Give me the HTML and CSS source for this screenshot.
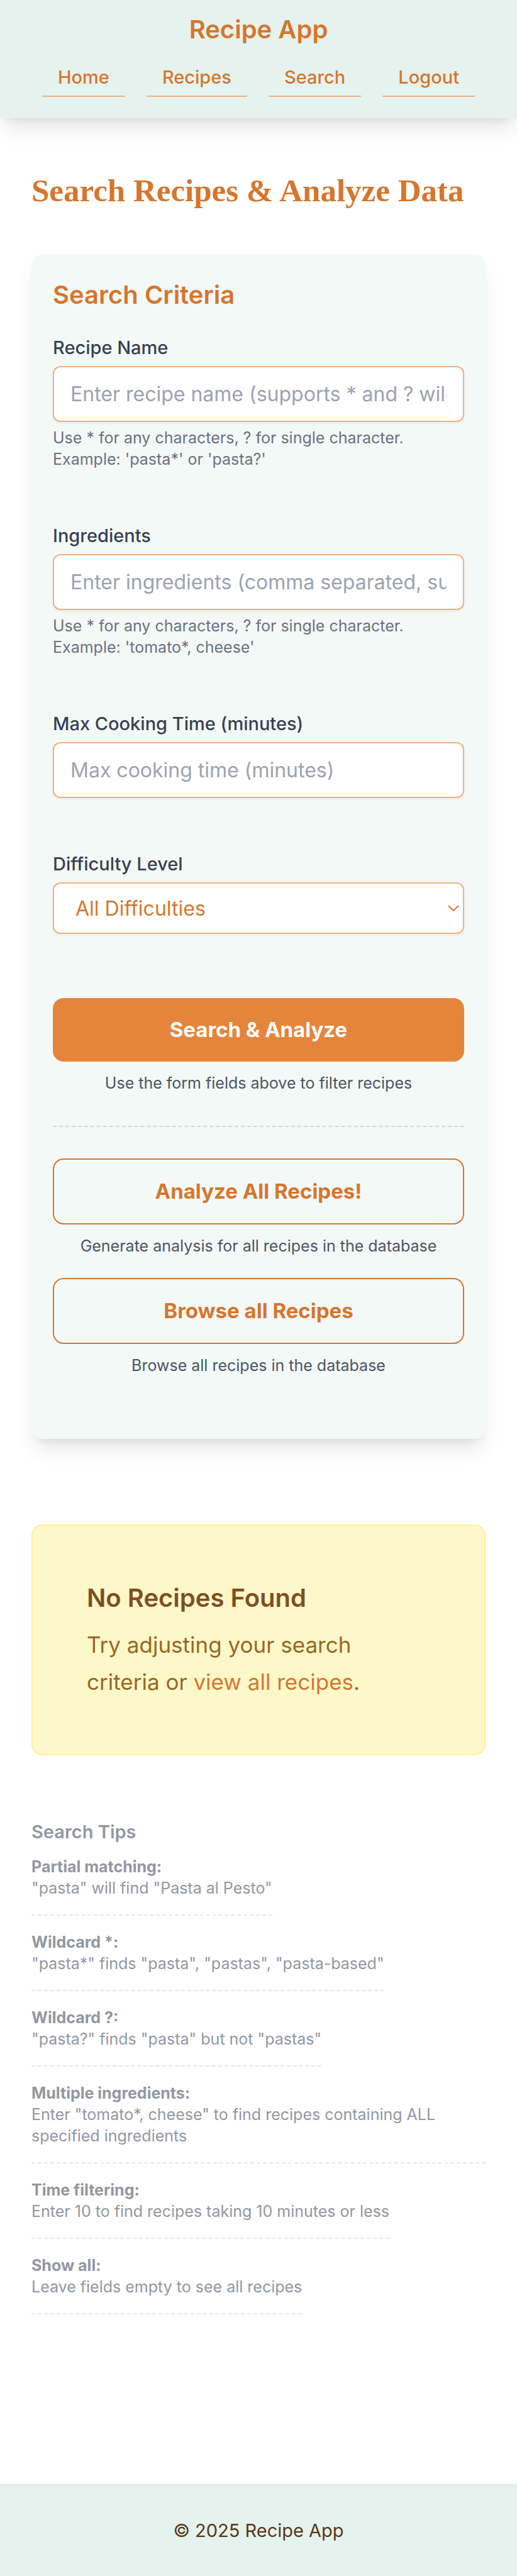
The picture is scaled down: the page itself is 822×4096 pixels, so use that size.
FILE: index.html
```html
<!DOCTYPE html>
<html lang="en">
<head>
<meta charset="utf-8">
<meta name="viewport" content="width=device-width, initial-scale=1">
<title>Recipe App</title>
<link rel="stylesheet" href="styles.css">
</head>
<body>
<header class="site-header">
  <a class="brand" href="#">Recipe App</a>
  <nav class="nav" aria-label="Main">
    <a class="nav-link" href="#">Home</a>
    <a class="nav-link" href="#">Recipes</a>
    <a class="nav-link" href="#">Search</a>
    <a class="nav-link" href="#">Logout</a>
  </nav>
</header>

<main class="page">
  <h1 class="page-title">Search Recipes &amp; Analyze Data</h1>

  <form class="card">
    <h2 class="card-title">Search Criteria</h2>
    <div class="fields">
      <div class="field">
        <label class="label" for="name">Recipe Name</label>
        <input class="control" id="name" type="text" placeholder="Enter recipe name (supports * and ? wildcards)">
        <p class="hint">Use * for any characters, ? for single character.<br>Example: 'pasta*' or 'pasta?'</p>
      </div>
      <div class="field">
        <label class="label" for="ingredients">Ingredients</label>
        <input class="control" id="ingredients" type="text" placeholder="Enter ingredients (comma separated, supports * and ? wildcards)">
        <p class="hint">Use * for any characters, ? for single character.<br>Example: 'tomato*, cheese'</p>
      </div>
      <div class="field">
        <label class="label" for="time">Max Cooking Time (minutes)</label>
        <input class="control" id="time" type="text" inputmode="numeric" placeholder="Max cooking time (minutes)">
      </div>
      <div class="field">
        <label class="label" for="difficulty">Difficulty Level</label>
        <div class="select-wrap">
          <select class="control select" id="difficulty">
            <option>All Difficulties</option>
            <option>Easy</option>
            <option>Medium</option>
            <option>Hard</option>
          </select>
          <svg class="chevron" viewBox="0 0 18 10" aria-hidden="true"><path d="M1 1l8 8 8-8"/></svg>
        </div>
      </div>
    </div>

    <div class="action action-main">
      <button class="button button-solid" type="submit">Search &amp; Analyze</button>
      <p class="caption">Use the form fields above to filter recipes</p>
    </div>
    <div class="more-actions">
      <div class="action">
        <button class="button button-outline" type="button">Analyze All Recipes!</button>
        <p class="caption">Generate analysis for all recipes in the database</p>
      </div>
      <div class="action">
        <button class="button button-outline" type="button">Browse all Recipes</button>
        <p class="caption">Browse all recipes in the database</p>
      </div>
    </div>
  </form>

  <section class="notice">
    <h2 class="notice-title">No Recipes Found</h2>
    <p class="notice-text">Try adjusting your search criteria or <a class="notice-link" href="#">view all recipes</a>.</p>
  </section>

  <section class="tips">
    <h2 class="tips-title">Search Tips</h2>
    <ul class="tips-list">
      <li class="tip"><strong class="tip-name">Partial matching:</strong>"pasta" will find "Pasta al Pesto"</li>
      <li class="tip"><strong class="tip-name">Wildcard *:</strong>"pasta*" finds "pasta", "pastas", "pasta-based"</li>
      <li class="tip"><strong class="tip-name">Wildcard ?:</strong>"pasta?" finds "pasta" but not "pastas"</li>
      <li class="tip"><strong class="tip-name">Multiple ingredients:</strong>Enter "tomato*, cheese" to find recipes containing ALL specified ingredients</li>
      <li class="tip"><strong class="tip-name">Time filtering:</strong>Enter 10 to find recipes taking 10 minutes or less</li>
      <li class="tip"><strong class="tip-name">Show all:</strong>Leave fields empty to see all recipes</li>
    </ul>
  </section>
</main>

<footer class="site-footer">© 2025 Recipe App</footer>
</body>
</html>
```
FILE: styles.css
```css
*,
*::before,
*::after {
  box-sizing: border-box;
}

:root {
  --orange: #d5762e;
  --orange-fill: #e5853b;
  --orange-line: #efb27e;
  --mint: #e4f3ed;
  --mint-light: #f3f9f7;
  --shadow: 0 21px 32px -6px rgba(0, 0, 0, 0.1), 0 8px 13px -8px rgba(0, 0, 0, 0.1);
}

body {
  margin: 0;
  min-height: 100vh;
  display: flex;
  flex-direction: column;
  background: #fff;
  font-family: Inter, "Liberation Sans", sans-serif;
  font-size: 25px;
  line-height: 34px;
}

h1, h2, p, ul {
  margin: 0;
  padding: 0;
}

a {
  text-decoration: none;
}

.site-header {
  display: flex;
  flex-direction: column;
  align-items: center;
  gap: 17px;
  padding: 17px 34px 34px;
  background: var(--mint);
  box-shadow: var(--shadow);
}

.brand {
  color: var(--orange);
  font-size: 40px;
  font-weight: 600;
  line-height: 60px;
}

.nav {
  display: flex;
  justify-content: center;
  gap: 34px;
}

.nav-link {
  padding: 8px 25px;
  border-bottom: 2px solid var(--orange-line);
  color: var(--orange);
  font-size: 29px;
  font-weight: 500;
  line-height: 42px;
}

.page {
  flex: 1;
  padding: 85px 50px 100px;
}

.page-title {
  margin-bottom: 72px;
  color: var(--orange);
  font-family: "Liberation Serif", serif;
  font-size: 51px;
  font-weight: 700;
  line-height: 60px;
}

.card {
  padding: 34px 34px 100px;
  border-radius: 17px;
  background: var(--mint-light);
  box-shadow: var(--shadow);
}

.card-title {
  margin-bottom: 34px;
  color: var(--orange);
  font-size: 40px;
  font-weight: 600;
  line-height: 59px;
}

.fields {
  display: grid;
  gap: 84px;
}

.field {
  display: grid;
  gap: 8px;
}

.label {
  color: #374151;
  font-size: 29px;
  font-weight: 500;
  line-height: 42px;
}

.control {
  width: 100%;
  height: 89px;
  padding: 0 26px;
  border: 2px solid var(--orange-line);
  border-radius: 12px;
  background: #fff;
  box-shadow: 0 2px 4px rgba(0, 0, 0, 0.05);
  color: #374151;
  font-family: inherit;
  font-size: 32px;
}

.control::placeholder {
  color: #9ca3af;
  opacity: 1;
}

.select-wrap {
  display: grid;
  align-items: center;
}

.select,
.chevron {
  grid-area: 1 / 1;
}

.select {
  height: 82px;
  padding: 0 34px;
  appearance: none;
  color: var(--orange);
}

.chevron {
  justify-self: end;
  width: 18px;
  margin-right: 8px;
  fill: none;
  stroke: var(--orange);
  stroke-width: 2;
  pointer-events: none;
}

.hint {
  color: #6b7280;
}

.action {
  display: grid;
  gap: 17px;
}

.action-main {
  margin-top: 102px;
}

.button {
  width: 100%;
  border-radius: 17px;
  font-family: inherit;
  font-size: 33px;
  font-weight: 700;
  line-height: 51px;
}

.button-solid {
  padding: 25px;
  border: 0;
  background: var(--orange-fill);
  color: #fff;
}

.button-outline {
  padding: 25px;
  border: 2px solid var(--orange);
  background: transparent;
  color: var(--orange);
}

.caption {
  color: #4b5563;
  text-align: center;
}

.more-actions {
  display: grid;
  gap: 34px;
  margin-top: 51px;
  padding-top: 50px;
  border-top: 2px dashed #bfe3d6;
}

.notice {
  margin-top: 136px;
  padding: 85px 86px;
  border: 2px solid #fdf09a;
  border-radius: 17px;
  background: #fdf8c9;
}

.notice-title {
  margin-bottom: 16px;
  color: #7f4f1f;
  font-size: 40px;
  font-weight: 600;
  line-height: 59px;
}

.notice-text {
  max-width: 500px;
  color: #9b6622;
  font-size: 35px;
  line-height: 59px;
}

.notice-link {
  color: var(--orange);
}

.tips {
  margin-top: 101px;
  color: #9297a2;
}

.tips-title {
  margin-bottom: 17px;
  font-size: 29px;
  font-weight: 600;
  line-height: 42px;
}

.tips-list {
  display: grid;
  justify-items: start;
  gap: 25px;
  list-style: none;
}

.tip {
  padding-bottom: 25px;
  border-bottom: 2px dashed #e7e8eb;
}

.tip-name {
  display: block;
  font-weight: 700;
}

.site-footer {
  padding: 51px 34px;
  border-top: 2px solid #e5e7eb;
  background: var(--mint);
  color: #5c3614;
  font-size: 29px;
  line-height: 42px;
  text-align: center;
}
```
